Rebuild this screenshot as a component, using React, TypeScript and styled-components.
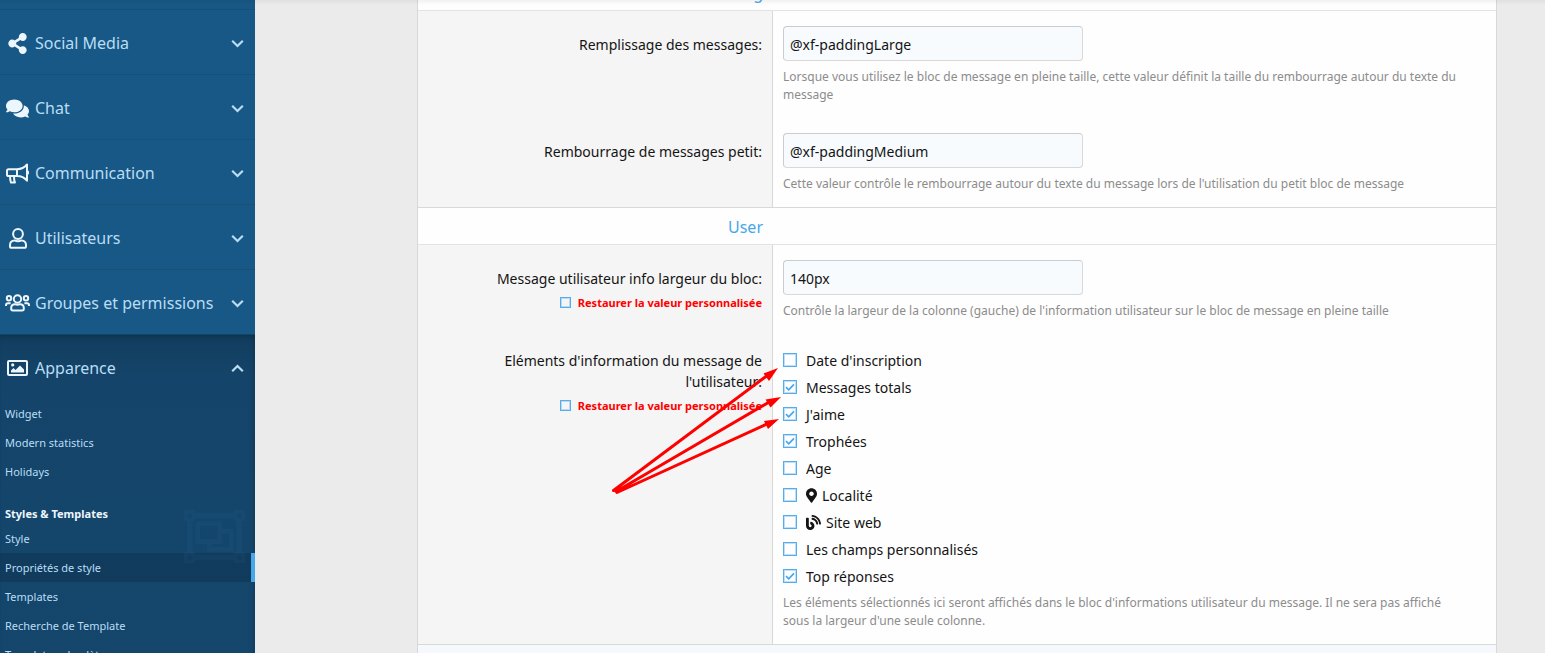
import React from "react";
import styled, { createGlobalStyle, css } from "styled-components";
import { FaShareAlt, FaComments, FaMapMarkerAlt, FaBlog, FaRegObjectGroup } from "react-icons/fa";

const GlobalStyle = createGlobalStyle`
  *, *::before, *::after { box-sizing: border-box; }
  html, body { margin: 0; height: 100%; }
  body {
    background: #ebebeb;
    color: #141414;
    font-family: "Segoe UI", "Noto Sans", "Open Sans", sans-serif;
    font-size: 14px;
    line-height: 21px;
  }
`;

const Shell = styled.div`
  position: relative;
  display: flex;
  height: 100vh;
  overflow: hidden;
`;

const TopShadow = styled.div`
  position: absolute;
  inset: 0 0 auto;
  height: 5px;
  background: linear-gradient(rgba(0, 0, 0, 0.05), rgba(0, 0, 0, 0));
  pointer-events: none;
`;

const Sidebar = styled.nav`
  flex: 0 0 255px;
  padding-top: 9px;
  background: #185886;
  overflow: hidden;
`;

const Section = styled.section<{ $open?: boolean }>`
  border-top: 1px solid #174f77;
  ${(p) =>
    p.$open &&
    css`
      height: 600px;
      border-top-color: #144669;
      background: linear-gradient(#123e5f, #144469 40px, #15486f);
      box-shadow: inset 0 6px 6px -4px rgba(0, 0, 0, 0.2), inset -5px 0 5px -4px rgba(0, 0, 0, 0.15);
    `}
`;

const SectionButton = styled.button`
  display: flex;
  align-items: center;
  width: 100%;
  height: 64px;
  padding: 2px 11px 0 5px;
  border: 0;
  background: none;
  color: #b9ddf5;
  font: inherit;
  font-size: 16px;
  text-align: left;
`;

const SectionIcon = styled.span`
  display: flex;
  justify-content: center;
  width: 25px;
  margin-right: 5px;
  color: #edf6fd;
`;

const SectionTitle = styled.span`
  flex: 1;
  white-space: nowrap;
`;

const LinkList = styled.ul`
  margin: 0;
  padding: 0;
  list-style: none;
`;

const NavLink = styled.a<{ $active?: boolean }>`
  display: block;
  height: 29px;
  padding: 0 5px;
  border-right: 4px solid transparent;
  color: #b9ddf5;
  font-size: 11px;
  line-height: 29px;
  text-decoration: none;
  white-space: nowrap;
  ${(p) =>
    p.$active &&
    css`
      border-right-color: #47a7eb;
      background: rgba(15, 54, 82, 0.6);
    `}
`;

const LinkGroup = styled.div`
  position: relative;
  margin-top: 17px;
`;

const GroupTitle = styled.h3`
  margin: 0;
  padding: 0 5px;
  color: #edf6fd;
  font-size: 11px;
  line-height: 21px;
`;

const Watermark = styled(FaRegObjectGroup)`
  position: absolute;
  top: 3px;
  right: 10px;
  color: rgba(71, 167, 235, 0.05);
  font-size: 61px;
`;

const Main = styled.main`
  flex: 1;
  min-width: 0;
  padding: 0 48px 0 162px;
`;

/* The form is scrolled so that only the foot of its first heading shows. */
const Card = styled.form`
  margin-top: -26px;
  border: solid #d8d8d8;
  border-width: 0 1px;
  background: #fefefe;
`;

const GroupHeader = styled.h3`
  display: grid;
  grid-template-columns: 355px 1fr;
  margin: 0;
  padding-top: 2px;
  border-bottom: 1px solid #e3e3e3;
  color: #47a7eb;
  font-size: 16px;
  font-weight: 400;
  line-height: 34px;

  span {
    padding-right: 10px;
    text-align: right;
  }
`;

const Fields = styled.div`
  border-bottom: 1px solid #d8d8d8;
`;

const Field = styled.div`
  display: grid;
  grid-template-columns: 355px 1fr;
`;

const LabelCell = styled.div<{ $list?: boolean }>`
  padding: ${(p) => (p.$list ? 16 : 23)}px 10px 14px;
  border-right: 1px solid #d8d8d8;
  background: #f5f5f5;
  text-align: right;
`;

const ListLabel = styled.div`
  padding-left: 60px;
`;

const ValueCell = styled.div<{ $list?: boolean }>`
  padding: ${(p) => (p.$list ? 16 : 15)}px 10px 14px;
`;

const TextInput = styled.input`
  display: block;
  width: 300px;
  height: 35px;
  padding: 1px 6px 0;
  border: 1px solid #d8d8d8;
  border-top-color: #c8cdd1;
  border-left-color: #c8cdd1;
  border-radius: 4px;
  background: #f7fbfe;
  color: #141414;
  font: inherit;
`;

const Hint = styled.p`
  margin: 7px 0 0;
  padding-right: 25px;
  color: #8c8c8c;
  font-size: 12px;
  line-height: 18px;
`;

const Tick = styled.span<{ $size: number }>`
  display: inline-grid;
  width: ${(p) => p.$size}px;
  height: ${(p) => p.$size}px;
  margin-bottom: 2px;

  > * {
    grid-area: 1 / 1;
    width: 100%;
    height: 100%;
    margin: 0;
  }

  input {
    appearance: none;
    border: 1px solid #55adec;
    outline: 1px solid rgba(71, 167, 235, 0.35);
    outline-offset: -2px;
  }

  svg {
    pointer-events: none;
  }
`;

const Restore = styled.label`
  display: flex;
  justify-content: flex-end;
  align-items: center;
  gap: 7px;
  margin-top: 5px;
  color: #ff0000;
  font-size: 11px;
  font-weight: 700;
  line-height: 18px;
`;

const Choices = styled.div`
  display: grid;
  gap: 6px;
`;

const Choice = styled.label`
  display: flex;
  align-items: center;
  gap: 9px;
`;

const ChoiceText = styled.span`
  display: flex;
  align-items: center;
  gap: 5px;
`;

const PinIcon = styled(FaMapMarkerAlt)`
  width: 11px;
  height: 15px;
`;

const NextBlock = styled.div`
  height: 40px;
  background: #f5f9fd;
`;

function CheckBox({ size = 14, checked }: { size?: number; checked?: boolean }) {
  return (
    <Tick $size={size}>
      <input type="checkbox" defaultChecked={checked} />
      {checked && (
        <svg viewBox="0 0 14 14" fill="none" stroke="#47a7eb" strokeWidth="1.7">
          <path d="M3 7.2 5.7 9.8 11 4.4" />
        </svg>
      )}
    </Tick>
  );
}

const Chevron = ({ up }: { up?: boolean }) => (
  <svg width="13" height="9" viewBox="0 0 13 9" fill="none" stroke="#b9ddf5" strokeWidth="2.2">
    <path d={up ? "M1.2 7.2 6.5 2 11.8 7.2" : "M1.2 1.8 6.5 7 11.8 1.8"} />
  </svg>
);

const line = { fill: "none", stroke: "currentColor", strokeWidth: 2, strokeLinejoin: "round" as const };

const Bullhorn = () => (
  <svg width="23" height="21" viewBox="0 0 23 21" {...line}>
    <path d="M11 6.2H2.6Q1 6.200 1 7.800V11.400Q1 13 2.600 13H11M11 6.200V13M11 6.200C15 6.200 18.500 4.600 21 1.500V17.700C18.500 14.600 15 13 11 13M21 8Q22.300 8.700 22.300 9.600T21 11.200M4 13C4 15.500 4.200 17.500 5 19.600H9C8 17.500 7.800 16 8.200 13" />
  </svg>
);

const UserIcon = () => (
  <svg width="18" height="21" viewBox="0 0 18 21" {...line}>
    <circle cx="9" cy="6" r="4.900" />
    <path d="M5.400 12.400C7.500 13.300 10.500 13.300 12.600 12.400C15.200 12.400 17 14.400 17 17V18.200Q17 19.800 15.400 19.800H2.600Q1 19.800 1 18.200V17C1 14.400 2.800 12.400 5.400 12.400Z" />
  </svg>
);

const UsersIcon = () => (
  <svg width="25" height="18" viewBox="0 0 25 18" {...line}>
    <circle cx="12.500" cy="5" r="3.700" />
    <path d="M10 10.200C11.700 10.900 13.300 10.900 15 10.200C17.400 10.200 18.800 11.800 18.800 14V14.800Q18.800 16.500 17.200 16.500H7.800Q6.200 16.500 6.200 14.800V14C6.200 11.800 7.600 10.200 10 10.200Z" />
    <circle cx="4" cy="4.200" r="2.200" />
    <circle cx="21" cy="4.200" r="2.200" />
    <path d="M1 12V11.200Q1 9.200 3 9.200H5.600M24 12V11.200Q24 9.200 22 9.200H19.400" />
  </svg>
);

const ImageIcon = () => (
  <svg width="21" height="16" viewBox="0 0 21 16" {...line}>
    <rect x="1" y="1" width="19" height="14" rx="1" />
    <path d="M4 12.500V10.500L6.500 8 8.500 10 13 5.500 17 9.500V12.500Z" fill="currentColor" stroke="none" />
    <circle cx="5.700" cy="4.900" r="1.600" fill="currentColor" stroke="none" />
  </svg>
);

const sections = [
  { title: "Social Media", icon: <FaShareAlt size={21} /> },
  { title: "Chat", icon: <FaComments size={23} /> },
  { title: "Communication", icon: <Bullhorn /> },
  { title: "Utilisateurs", icon: <UserIcon /> },
  { title: "Groupes et permissions", icon: <UsersIcon /> },
];

const choices: { text: string; icon?: React.ReactNode; checked?: boolean }[] = [
  { text: "Date d'inscription" },
  { text: "Messages totals", checked: true },
  { text: "J'aime", checked: true },
  { text: "Trophées", checked: true },
  { text: "Age" },
  { text: "Localité", icon: <PinIcon /> },
  { text: "Site web", icon: <FaBlog size={15} /> },
  { text: "Les champs personnalisés" },
  { text: "Top réponses", checked: true },
];

const Arrows = styled.svg`
  position: absolute;
  top: 358px;
  left: 605px;
  pointer-events: none;
`;

const RestoreOption = () => (
  <Restore>
    <CheckBox size={11} />
    Restaurer la valeur personnalisée
  </Restore>
);

function TextField({ id, label, value, hint, restore }: { id: string; label: string; value: string; hint: string; restore?: boolean }) {
  return (
    <Field>
      <LabelCell>
        <label htmlFor={id}>{label}</label>
        {restore && <RestoreOption />}
      </LabelCell>
      <ValueCell>
        <TextInput id={id} type="text" defaultValue={value} />
        <Hint>{hint}</Hint>
      </ValueCell>
    </Field>
  );
}

export default function App() {
  return (
    <Shell>
      <GlobalStyle />
      <Sidebar>
        {sections.map((s) => (
          <Section key={s.title}>
            <SectionButton type="button">
              <SectionIcon>{s.icon}</SectionIcon>
              <SectionTitle>{s.title}</SectionTitle>
              <Chevron />
            </SectionButton>
          </Section>
        ))}
        <Section $open>
          <SectionButton type="button">
            <SectionIcon><ImageIcon /></SectionIcon>
            <SectionTitle>Apparence</SectionTitle>
            <Chevron up />
          </SectionButton>
          <LinkList>
            <li><NavLink href="#widget">Widget</NavLink></li>
            <li><NavLink href="#statistics">Modern statistics</NavLink></li>
            <li><NavLink href="#holidays">Holidays</NavLink></li>
          </LinkList>
          <LinkGroup>
            <Watermark />
            <GroupTitle>Styles &amp; Templates</GroupTitle>
            <LinkList>
              <li><NavLink href="#style">Style</NavLink></li>
              <li><NavLink href="#properties" $active>Propriétés de style</NavLink></li>
              <li><NavLink href="#templates">Templates</NavLink></li>
              <li><NavLink href="#search">Recherche de Template</NavLink></li>
              <li><NavLink href="#outdated">Templates obsolètes</NavLink></li>
            </LinkList>
          </LinkGroup>
        </Section>
      </Sidebar>
      <Main>
        <Card>
          <GroupHeader><span>Padding</span></GroupHeader>
          <Fields>
            <TextField
              id="padding-large"
              label="Remplissage des messages:"
              value="@xf-paddingLarge"
              hint="Lorsque vous utilisez le bloc de message en pleine taille, cette valeur définit la taille du rembourrage autour du texte du message"
            />
            <TextField
              id="padding-medium"
              label="Rembourrage de messages petit:"
              value="@xf-paddingMedium"
              hint="Cette valeur contrôle le rembourrage autour du texte du message lors de l'utilisation du petit bloc de message"
            />
          </Fields>
          <GroupHeader><span>User</span></GroupHeader>
          <Fields>
            <TextField
              id="user-width"
              label="Message utilisateur info largeur du bloc:"
              value="140px"
              hint="Contrôle la largeur de la colonne (gauche) de l'information utilisateur sur le bloc de message en pleine taille"
              restore
            />
            <Field role="group" aria-labelledby="user-elements">
              <LabelCell $list>
                <ListLabel id="user-elements">Eléments d'information du message de l'utilisateur:</ListLabel>
                <RestoreOption />
              </LabelCell>
              <ValueCell $list>
                <Choices>
                  {choices.map((c) => (
                    <Choice key={c.text}>
                      <CheckBox checked={c.checked} />
                      <ChoiceText>{c.icon}{c.text}</ChoiceText>
                    </Choice>
                  ))}
                </Choices>
                <Hint>Les éléments sélectionnés ici seront affichés dans le bloc d'informations utilisateur du message. Il ne sera pas affiché sous la largeur d'une seule colonne.</Hint>
              </ValueCell>
            </Field>
          </Fields>
          <NextBlock />
        </Card>
      </Main>
      <TopShadow />
      <Arrows width="180" height="140" viewBox="605 358 180 140" fill="#ff0000" stroke="#ff0000">
        <path d="M613.500 490.500 768 375M616 491.500 771 401M617 492.500 768 423.500" strokeWidth="3" strokeLinecap="round" fill="none" />
        <path d="M778 368 763.500 373.500 769 381ZM781 397 765.500 399.500 770.500 407.500ZM779 419 764 421 768 429Z" stroke="none" />
      </Arrows>
    </Shell>
  );
}
